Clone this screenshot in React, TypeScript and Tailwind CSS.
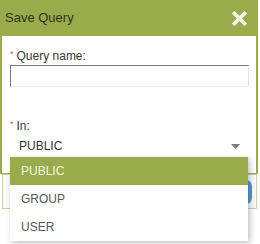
import React from "react";

export default function App() {
  const items = ["PUBLIC", "GROUP", "USER"];
  return (
    <div
      className="relative w-[260px] h-[244px] overflow-hidden bg-white"
      style={{ fontFamily: '"Liberation Sans", Arial, sans-serif' }}
    >
      <div className="w-[258px] flex flex-col">
        <div className="h-[36px] bg-[#99ab4b] flex items-center justify-between pl-[5px] pr-[11px]">
          <span className="text-[13px] text-[#2f3320]">Save Query</span>
          <svg width="15" height="15" viewBox="0 0 15 15">
            <path d="M2.5 2.5 L12.5 12.5 M12.5 2.5 L2.5 12.5" stroke="#f2f4e8" strokeWidth="3.8" strokeLinecap="square" />
          </svg>
        </div>
        <div className="h-[138px] bg-white border-x-2 border-b border-[#99ab4b] pl-[8px] pr-[7px] pt-[13px] flex flex-col">
          <div className="flex items-start text-[12px] text-[#383838] leading-[14px]">
            <span className="text-[#e0504a] text-[9px] mr-[3px] leading-[11px]">*</span>
            <span>Query name:</span>
          </div>
          <div className="mt-[2px] h-[22px] border border-t-[#7a7a7a] border-l-[#7a7a7a] border-r-[#e2e2e2] border-b-[#e8e8e8] bg-white" />
          <div className="mt-[32px] flex items-start text-[12px] text-[#383838] leading-[14px]">
            <span className="text-[#e0504a] text-[9px] mr-[3px] leading-[11px]">*</span>
            <span>In:</span>
          </div>
          <div className="mt-[6px] flex items-center justify-between pl-[9px] pr-[9px] text-[12px] text-[#333] leading-[14px]">
            <span>PUBLIC</span>
            <svg width="9" height="5" viewBox="0 0 9 5">
              <path d="M0 0 L9 0 L4.5 5 Z" fill="#7a7a7a" />
            </svg>
          </div>
        </div>
        <div className="ml-[2px] w-[255px] h-[35px] border border-[#c9d3a4] bg-[#fafafa] flex items-center justify-end pr-[4px]">
          <div className="w-[60px] h-[24px] rounded-[6px] bg-[#5b9bc9]" />
        </div>
      </div>

      <div className="absolute left-[10px] top-[157px] w-[238px] bg-white shadow-[2px_2px_6px_rgba(0,0,0,0.25)] flex flex-col">
        {items.map((it, i) => (
          <div
            key={it}
            className={
              i === 0
                ? "h-[28px] flex items-center pl-[11px] text-[12px] bg-[#99ab4b] text-[#f4f6e6]"
                : "h-[28px] flex items-center pl-[11px] text-[12px] bg-white text-[#555]"
            }
          >
            {it}
          </div>
        ))}
      </div>
    </div>
  );
}
